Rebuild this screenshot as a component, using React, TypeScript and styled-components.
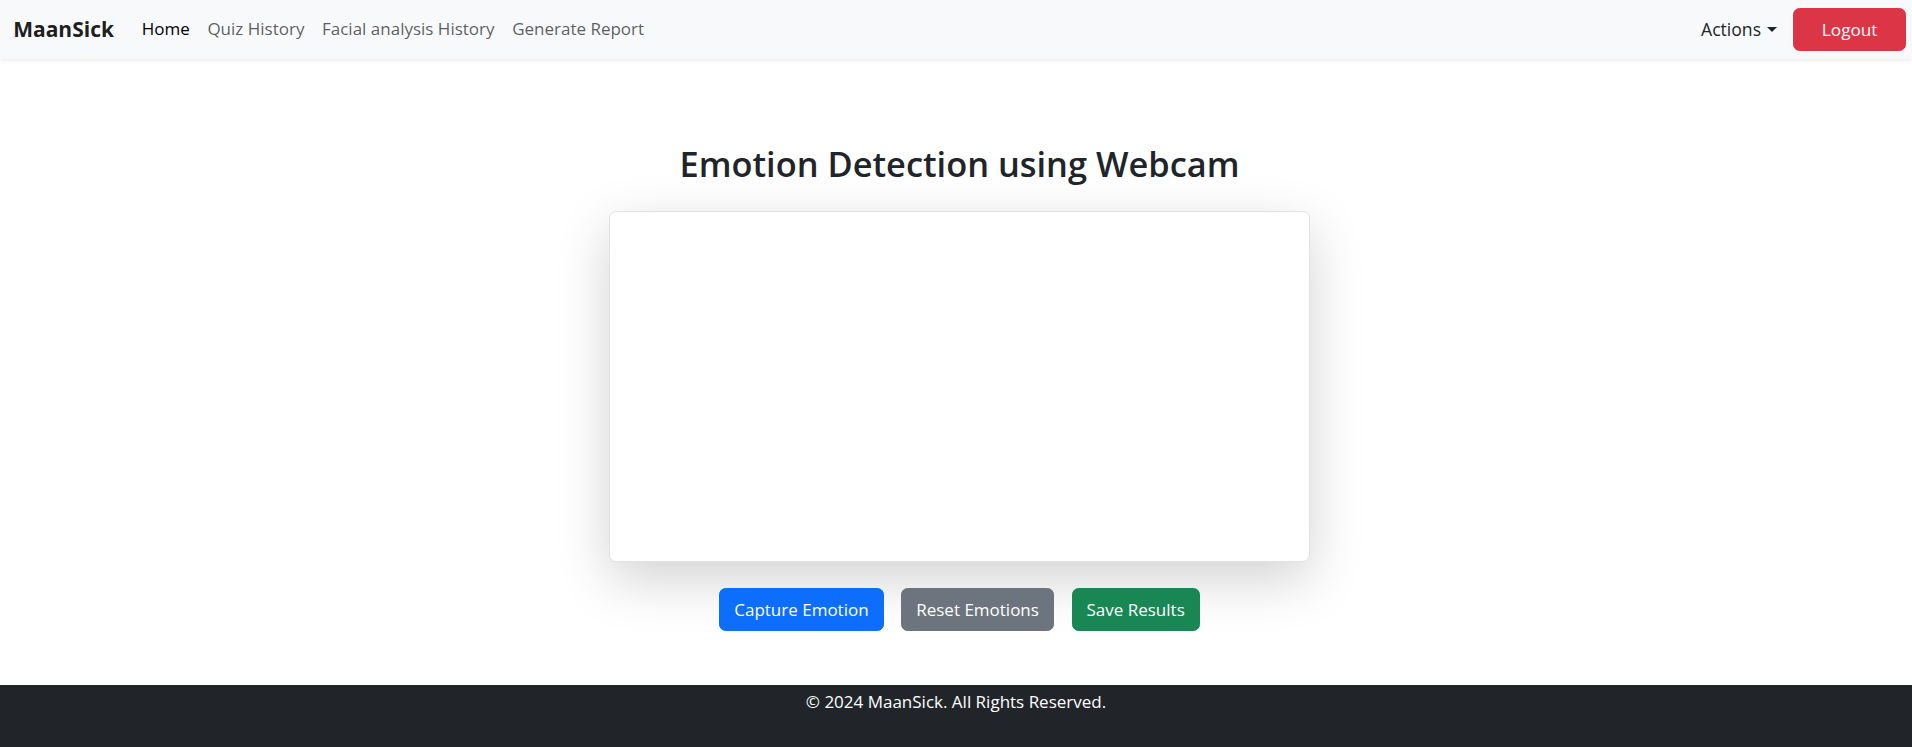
import React from "react";
import styled, { createGlobalStyle } from "styled-components";

const GlobalStyle = createGlobalStyle`
  *, *::before, *::after { box-sizing: border-box; }
  body {
    margin: 0;
    font-family: "Open Sans", "Noto Sans", sans-serif;
    font-size: 17px;
    line-height: 26.4px;
    color: #212529;
    background: #ffffff;
  }
`;

const Page = styled.div`
  display: flex;
  flex-direction: column;
  min-height: 100vh;
`;

const Navbar = styled.nav`
  position: relative;
  z-index: 2;
  display: flex;
  align-items: center;
  padding: 7px 6px 8px 13.2px;
  background: #f8f9fa;
  box-shadow: 0 2.2px 4.4px rgba(0, 0, 0, 0.075);
`;

const Brand = styled.a`
  margin-right: 19px;
  font-size: 21px;
  font-weight: 700;
  line-height: 33px;
  color: rgba(0, 0, 0, 0.9);
  text-decoration: none;
`;

const NavList = styled.ul`
  display: flex;
  margin: 0;
  padding: 0;
  list-style: none;
`;

const NavLink = styled.a<{ $active?: boolean }>`
  display: block;
  padding: 8.8px;
  font-size: 17px;
  color: ${(p) => (p.$active ? "rgba(0, 0, 0, 1)" : "rgba(0, 0, 0, 0.65)")};
  text-decoration: none;
  cursor: pointer;
`;

const RightGroup = styled.div`
  display: flex;
  align-items: center;
  margin-left: auto;
`;

const DropdownToggle = styled.a`
  display: flex;
  align-items: center;
  padding: 8.8px;
  font-size: 17.6px;
  color: #212529;
  text-decoration: none;
  cursor: pointer;

  &::after {
    content: "";
    display: inline-block;
    margin-left: 5.5px;
    border-top: 5.3px solid currentColor;
    border-left: 5.3px solid transparent;
    border-right: 5.3px solid transparent;
    border-bottom: 0;
  }
`;

const LogoutButton = styled.button`
  height: 43px;
  margin-left: 8px;
  padding: 0 27.5px;
  font-family: inherit;
  font-size: 17.2px;
  color: #ffffff;
  background: #dc3545;
  border: 1px solid #dc3545;
  border-radius: 6.6px;
  cursor: pointer;
`;

const Main = styled.main`
  flex: 1;
  display: flex;
  flex-direction: column;
  align-items: center;
  padding: 83.6px 0 54px 7px;
`;

const Title = styled.h2`
  margin: 0 0 26.4px;
  font-size: 34.4px;
  font-weight: 600;
  line-height: 42.24px;
  color: #212529;
`;

const CameraCard = styled.div`
  width: 701px;
  height: 351px;
  background: #ffffff;
  border: 1px solid #dee2e6;
  border-radius: 7px;
  box-shadow: 0 17.6px 52.8px rgba(0, 0, 0, 0.175);
`;

const ButtonRow = styled.div`
  display: flex;
  gap: 17.6px;
  margin-top: 26px;
`;

const variants = {
  primary: "#0d6efd",
  secondary: "#6c757d",
  success: "#198754",
} as const;

const ActionButton = styled.button<{ $variant: keyof typeof variants }>`
  height: 43px;
  padding: 0 14px;
  font-family: inherit;
  font-size: 17px;
  line-height: 26.4px;
  color: #ffffff;
  background: ${(p) => variants[p.$variant]};
  border: 1px solid ${(p) => variants[p.$variant]};
  border-radius: 6.6px;
  cursor: pointer;
`;

const Footer = styled.footer`
  padding: 4px 0 31.6px;
  font-size: 17px;
  line-height: 26.4px;
  text-align: center;
  color: #ffffff;
  background: #212529;
`;

const navItems = [
  { label: "Home", active: true },
  { label: "Quiz History" },
  { label: "Facial analysis History" },
  { label: "Generate Report" },
];

export default function App() {
  return (
    <Page>
      <GlobalStyle />
      <Navbar>
        <Brand>MaanSick</Brand>
        <NavList>
          {navItems.map((item) => (
            <li key={item.label}>
              <NavLink $active={item.active}>{item.label}</NavLink>
            </li>
          ))}
        </NavList>
        <RightGroup>
          <DropdownToggle>Actions</DropdownToggle>
          <LogoutButton>Logout</LogoutButton>
        </RightGroup>
      </Navbar>
      <Main>
        <Title>Emotion Detection using Webcam</Title>
        <CameraCard />
        <ButtonRow>
          <ActionButton $variant="primary">Capture Emotion</ActionButton>
          <ActionButton $variant="secondary">Reset Emotions</ActionButton>
          <ActionButton $variant="success">Save Results</ActionButton>
        </ButtonRow>
      </Main>
      <Footer>© 2024 MaanSick. All Rights Reserved.</Footer>
    </Page>
  );
}
